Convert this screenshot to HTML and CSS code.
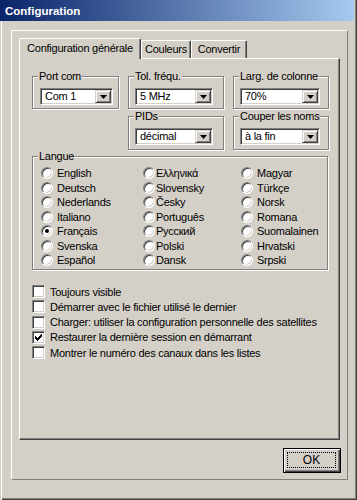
FILE: index.html
```html
<!DOCTYPE html>
<html>
<head>
<meta charset="utf-8">
<link rel="stylesheet" href="styles.css">
</head>
<body>
<div class="window">
  <div class="titlebar">Configuration</div>
  <div class="frame">
    <div class="tabs">
      <div class="tab tab-active">Configuration générale</div>
      <div class="tab tab-colors">Couleurs</div>
      <div class="tab tab-convert">Convertir</div>
    </div>
    <div class="panel">
      <div class="top-grid">
        <div class="gb gb-port">
          <div class="gb-label">Port com</div>
          <div class="combo w-port"><span class="combo-text">Com 1</span><span class="dd"><svg width="7" height="4" viewBox="0 0 7 4"><polygon points="0,0 7,0 3.5,4" fill="#000"/></svg></span></div>
        </div>
        <div class="gb">
          <div class="gb-label">Tol. fréqu.</div>
          <div class="combo w-mid"><span class="combo-text">5 MHz</span><span class="dd"><svg width="7" height="4" viewBox="0 0 7 4"><polygon points="0,0 7,0 3.5,4" fill="#000"/></svg></span></div>
        </div>
        <div class="gb">
          <div class="gb-label">Larg. de colonne</div>
          <div class="combo w-wide"><span class="combo-text">70%</span><span class="dd"><svg width="7" height="4" viewBox="0 0 7 4"><polygon points="0,0 7,0 3.5,4" fill="#000"/></svg></span></div>
        </div>
        <div class="gb gb-pids">
          <div class="gb-label">PIDs</div>
          <div class="combo w-mid"><span class="combo-text">décimal</span><span class="dd"><svg width="7" height="4" viewBox="0 0 7 4"><polygon points="0,0 7,0 3.5,4" fill="#000"/></svg></span></div>
        </div>
        <div class="gb gb-cut">
          <div class="gb-label">Couper les noms</div>
          <div class="combo w-wide"><span class="combo-text">à la fin</span><span class="dd"><svg width="7" height="4" viewBox="0 0 7 4"><polygon points="0,0 7,0 3.5,4" fill="#000"/></svg></span></div>
        </div>
      </div>

      <div class="gb gb-lang">
        <div class="gb-label">Langue</div>
        <div class="radios">
          <div class="ropt"><span class="radio"></span>English</div>
          <div class="ropt"><span class="radio"></span>Deutsch</div>
          <div class="ropt"><span class="radio"></span>Nederlands</div>
          <div class="ropt"><span class="radio"></span>Italiano</div>
          <div class="ropt"><span class="radio radio-on"></span>Français</div>
          <div class="ropt"><span class="radio"></span>Svenska</div>
          <div class="ropt"><span class="radio"></span>Español</div>
          <div class="ropt ropt-tight"><span class="radio"></span>Ελληνικά</div>
          <div class="ropt ropt-tight"><span class="radio"></span>Slovensky</div>
          <div class="ropt ropt-tight"><span class="radio"></span>Česky</div>
          <div class="ropt ropt-tight"><span class="radio"></span>Português</div>
          <div class="ropt ropt-tight"><span class="radio"></span>Русский</div>
          <div class="ropt ropt-tight"><span class="radio"></span>Polski</div>
          <div class="ropt ropt-tight"><span class="radio"></span>Dansk</div>
          <div class="ropt"><span class="radio"></span>Magyar</div>
          <div class="ropt"><span class="radio"></span>Türkçe</div>
          <div class="ropt"><span class="radio"></span>Norsk</div>
          <div class="ropt"><span class="radio"></span>Romana</div>
          <div class="ropt"><span class="radio"></span>Suomalainen</div>
          <div class="ropt"><span class="radio"></span>Hrvatski</div>
          <div class="ropt"><span class="radio"></span>Srpski</div>
        </div>
      </div>

      <div class="checks">
        <div class="copt"><span class="cb"></span>Toujours visible</div>
        <div class="copt"><span class="cb"></span>Démarrer avec le fichier utilisé le dernier</div>
        <div class="copt"><span class="cb"></span>Charger: utiliser la configuration personnelle des satellites</div>
        <div class="copt"><span class="cb"><svg width="7" height="7" viewBox="0 0 7 7" shape-rendering="crispEdges"><rect x="0" y="2" width="1" height="3"/><rect x="1" y="3" width="1" height="3"/><rect x="2" y="4" width="1" height="3"/><rect x="3" y="3" width="1" height="3"/><rect x="4" y="2" width="1" height="3"/><rect x="5" y="1" width="1" height="3"/><rect x="6" y="0" width="1" height="3"/></svg></span>Restaurer la dernière session en démarrant</div>
        <div class="copt"><span class="cb"></span>Montrer le numéro des canaux dans les listes</div>
      </div>
    </div>
    <div class="footer">
      <div class="ok"><span class="ok-focus">OK</span></div>
    </div>
  </div>
</div>
</body>
</html>
```

FILE: styles.css
```css
html, body {
  margin: 0;
  padding: 0;
  background: #D4D0C8;
}
body {
  font-family: "Liberation Sans", Arial, sans-serif;
  font-size: 11px;
  letter-spacing: -0.25px;
  color: #000;
}
.window {
  width: 357px;
  height: 500px;
  box-sizing: border-box;
  background: #D4D0C8;
  box-shadow: inset 1px 0 0 #D4D0C8, inset 2px 0 0 #fff,
              inset -1px -1px 0 #404040, inset -2px -2px 0 #808080;
  display: flex;
  flex-direction: column;
}
.titlebar {
  height: 21px;
  margin-right: 3px;
  box-sizing: border-box;
  padding-left: 5px;
  background: linear-gradient(to right, #0A246A, #A6CAF0);
  color: #fff;
  font-weight: bold;
  font-size: 11.5px;
  letter-spacing: 0;
  display: flex;
  align-items: center;
}
.frame {
  margin: 9px 0 0 11px;
  width: 337px;
  height: 450px;
  box-sizing: border-box;
  border-top: 1px solid #fff;
  border-left: 1px solid #fff;
  border-right: 1px solid #808080;
  border-bottom: 1px solid #808080;
  padding: 7px 0 0 7px;
}
.tabs {
  display: flex;
  align-items: flex-end;
  height: 20px;
  position: relative;
  z-index: 1;
}
.tab {
  box-sizing: border-box;
  height: 18px;
  border-top: 1px solid #fff;
  border-left: 1px solid #fff;
  border-right: 1px solid #404040;
  border-top-left-radius: 2px;
  border-top-right-radius: 2px;
  box-shadow: inset -1px 0 0 #808080;
  background: #D4D0C8;
  display: flex;
  align-items: center;
  justify-content: center;
  padding-bottom: 1px;
}
.tab-active {
  width: 122px;
  height: 21px;
  margin-bottom: -1px;
  padding-bottom: 3px;
}
.tab-colors {
  width: 50px;
}
.tab-convert {
  width: 56px;
}
.panel {
  width: 321px;
  height: 382px;
  box-sizing: border-box;
  border-top: 1px solid #fff;
  border-left: 1px solid #fff;
  border-right: 1px solid #404040;
  border-bottom: 1px solid #404040;
  box-shadow: inset -1px -1px 0 #808080;
  padding: 17px 0 0 12px;
}
.top-grid {
  display: grid;
  grid-template-columns: 87px 96px 96px;
  grid-template-rows: 33px 34px;
  column-gap: 9px;
  row-gap: 7px;
}
.gb {
  box-sizing: border-box;
  border: 1px solid #808080;
  box-shadow: inset 1px 1px 0 #fff, 1px 1px 0 #fff;
  padding-left: 6px;
}
.gb-pids { grid-column: 2; grid-row: 2; }
.gb-cut { grid-column: 3; grid-row: 2; }
.gb-label {
  width: max-content;
  margin-top: -7px;
  margin-left: -1px;
  padding: 0 1px;
  line-height: 13px;
  height: 13px;
  background: #D4D0C8;
}
.combo {
  margin-top: 5px;
  height: 17px;
  box-sizing: border-box;
  border: 1px solid;
  border-color: #808080 #fff #fff #808080;
  box-shadow: inset 1px 1px 0 #404040, inset -1px -1px 0 #D4D0C8;
  background: #fff;
  display: flex;
  align-items: center;
  padding: 1px 1px 1px 4px;
}
.w-port { width: 73px; margin-left: 1px; }
.w-mid { width: 78px; }
.w-wide { width: 80px; }
.combo-text {
  flex: 1;
  line-height: 13px;
}
.dd {
  width: 16px;
  height: 13px;
  box-sizing: border-box;
  background: #D4D0C8;
  border: 1px solid;
  border-color: #D4D0C8 #404040 #404040 #D4D0C8;
  box-shadow: inset 1px 1px 0 #fff, inset -1px -1px 0 #808080;
  display: flex;
  align-items: center;
  justify-content: center;
}
.dd svg { display: block; }
.gb-lang {
  margin-top: 6px;
  width: 296px;
  height: 114px;
}
.radios {
  margin-top: 3px;
  margin-left: 2px;
  display: grid;
  grid-auto-flow: column;
  grid-template-columns: 102px 98px auto;
  grid-template-rows: repeat(7, 14.5px);
}
.ropt {
  display: flex;
  align-items: center;
  gap: 4px;
  white-space: nowrap;
}
.ropt-tight {
  gap: 1px;
}
.radio {
  width: 12px;
  height: 12px;
  flex: none;
  box-sizing: border-box;
  border-radius: 50%;
  border: 1px solid;
  border-color: #808080 #fff #fff #808080;
  box-shadow: inset 1px 1px 0 #404040, inset -1px -1px 0 #D4D0C8;
  background: #fff;
  display: flex;
  align-items: center;
  justify-content: center;
}
.radio-on::after {
  content: "";
  width: 4px;
  height: 4px;
  border-radius: 50%;
  background: #000;
}
.checks {
  margin-top: 14px;
  display: grid;
  grid-auto-rows: 15.25px;
}
.copt {
  display: flex;
  align-items: center;
  gap: 5px;
  white-space: nowrap;
}
.cb {
  width: 13px;
  height: 13px;
  flex: none;
  box-sizing: border-box;
  border: 1px solid;
  border-color: #808080 #fff #fff #808080;
  box-shadow: inset 1px 1px 0 #404040, inset -1px -1px 0 #D4D0C8;
  background: #fff;
  display: flex;
  align-items: center;
  justify-content: center;
}
.cb svg { display: block; fill: #000; }
.footer {
  display: flex;
  justify-content: flex-end;
  margin-top: 8px;
  padding-right: 6px;
}
.ok {
  width: 58px;
  height: 25px;
  box-sizing: border-box;
  border: 1px solid #000;
  background: #D4D0C8;
  box-shadow: inset 1px 1px 0 #fff, inset -1px -1px 0 #404040, inset -2px -2px 0 #808080;
  padding: 3px 4px 4px 3px;
  display: flex;
}
.ok-focus {
  flex: 1;
  border: 1px dotted #000;
  display: flex;
  align-items: center;
  justify-content: center;
  font-size: 12px;
  letter-spacing: 0;
}
```
